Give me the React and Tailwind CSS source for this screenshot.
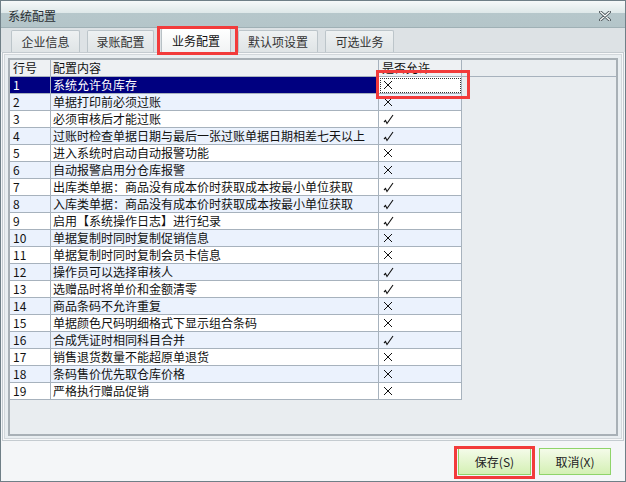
import React from "react";

const rows = [
  ["系统允许负库存", false],
  ["单据打印前必须过账", false],
  ["必须审核后才能过账", true],
  ["过账时检查单据日期与最后一张过账单据日期相差七天以上", true],
  ["进入系统时启动自动报警功能", false],
  ["自动报警启用分仓库报警", false],
  ["出库类单据：商品没有成本价时获取成本按最小单位获取", true],
  ["入库类单据：商品没有成本价时获取成本按最小单位获取", true],
  ["启用【系统操作日志】进行纪录", true],
  ["单据复制时同时复制促销信息", false],
  ["单据复制时同时复制会员卡信息", false],
  ["操作员可以选择审核人", true],
  ["选赠品时将单价和金额清零", true],
  ["商品条码不允许重复", false],
  ["单据颜色尺码明细格式下显示组合条码", false],
  ["合成凭证时相同科目合并", true],
  ["销售退货数量不能超原单退货", false],
  ["条码售价优先取仓库价格", false],
  ["严格执行赠品促销", false],
];

function Cross() {
  return (
    <svg width="10" height="10" viewBox="0 0 10 10" className="block">
      <path d="M1 1 L9 9 M9 1 L1 9" stroke="#111" strokeWidth="1" fill="none" />
    </svg>
  );
}

function Check() {
  return (
    <svg width="11" height="11" viewBox="0 0 11 11" className="block">
      <path d="M1 8 L2.5 6.5 L4 9.5 L10 1" stroke="#111" strokeWidth="1.1" fill="none" />
    </svg>
  );
}

const tabs = [
  ["企业信息", "w-[69px]"],
  ["录账配置", "w-[67px]"],
  ["业务配置", "w-[70px]"],
  ["默认项设置", "w-[80px]"],
  ["可选业务", "w-[69px]"],
];

export default function App() {
  return (
    <div className="relative w-[626px] h-[482px] border border-[#6f7f87] bg-[#f4f6f8] flex flex-col overflow-hidden font-['Noto_Sans_CJK_SC','Noto_Sans',sans-serif] text-[12px] text-[#111] leading-none whitespace-nowrap">
      {/* title bar */}
      <div className="h-[27px] shrink-0 flex items-end justify-between pl-[7px] pr-[14px] pb-[5px] bg-[linear-gradient(to_bottom,#f6f9f9_0%,#dde7e8_48%,#b6c7cb_48%,#b4c5c9_100%)] border-b border-[#9fb0b5]">
        <span className="text-[12px] text-[#2a2f33]">系统配置</span>
        <svg width="12" height="10" viewBox="0 0 12 10" className="mb-[1px]">
          <path d="M1.5 1 L10.5 9 M10.5 1 L1.5 9" stroke="#4a5358" strokeWidth="3" strokeLinecap="round" />
          <path d="M1.5 1 L10.5 9 M10.5 1 L1.5 9" stroke="#ffffff" strokeWidth="1.2" strokeLinecap="round" />
        </svg>
      </div>

      {/* tab strip */}
      <div className="h-[24px] shrink-0 bg-[#dde2e5] flex items-end pl-[10px] gap-[7px]">
        {tabs.map(([t, w], i) =>
          i === 2 ? (
            <div
              key={t}
              className={`${w} h-[24px] flex items-center justify-center bg-[linear-gradient(to_bottom,#ffffff,#f1f3f4)] border border-b-0 border-[#b7c0c5] text-[12px] text-[#111] rounded-t-[2px]`}
            >
              {t}
            </div>
          ) : (
            <div
              key={t}
              className={`${w} h-[22px] flex items-center justify-center bg-[linear-gradient(to_bottom,#eef1f2,#dfe4e6)] border border-b-0 border-[#bcc5ca] text-[12px] text-[#333] rounded-t-[2px]`}
            >
              {t}
            </div>
          )
        )}
      </div>

      {/* panel */}
      <div className="flex-1 mx-[1px] border border-[#c4cbd0] bg-[#f7f8f9] p-[1px] flex">
        <div className="flex-1 border border-[#d2d7db] bg-[#e9eef1] pt-[3px] pb-[2px] px-[3px] flex">
          <div className="flex-1 border-2 border-double border-[#a8b0b6] bg-[#e9edf0] relative">
            {/* header */}
            <div className="flex h-[17px] border-b border-[#a7b2bd]">
              <div className="w-[41px] border-r border-[#a7b2bd] flex items-center pl-[3px] bg-[#eef1f3] text-[12px]">行号</div>
              <div className="w-[328px] border-r border-[#a7b2bd] flex items-center pl-[2px] bg-[#eef1f3] text-[12px]">配置内容</div>
              <div className="w-[83px] border-r border-[#a7b2bd] flex items-center pl-[3px] bg-[#eef1f3] text-[12px]">是否允许</div>
            </div>
            {rows.map(([text, ok], i) => {
              const sel = i === 0;
              const bg = sel ? "" : i % 2 === 1 ? "bg-[#ebf2fd]" : "bg-white";
              return (
                <div key={i} className="flex h-[17px]">
                  <div
                    className={`w-[41px] border-r border-b border-[#a7b2bd] flex items-center pl-[3px] text-[12px] ${
                      sel ? "bg-[#000080] text-white" : bg
                    }`}
                  >
                    {i + 1}
                  </div>
                  <div
                    className={`w-[328px] border-r border-b border-[#a7b2bd] flex items-center pl-[2px] text-[12px] ${
                      sel ? "bg-[#000080] text-white" : bg
                    }`}
                  >
                    {text}
                  </div>
                  <div
                    className={`w-[83px] border-r border-b border-[#a7b2bd] flex items-center pl-[4px] ${
                      sel ? "bg-white outline-1 outline-dotted outline-[#333] -outline-offset-2" : bg
                    }`}
                  >
                    {ok ? <Check /> : <Cross />}
                  </div>
                </div>
              );
            })}
          </div>
        </div>
      </div>

      {/* footer */}
      <div className="h-[40px] shrink-0 bg-[#f4f6f8] flex items-center justify-end gap-[8px] pr-[14px] pt-[1px]">
        <button className="w-[73px] h-[27px] border border-[#8fd46a] bg-[linear-gradient(to_bottom,#f4fbe9,#d4f0b4)] text-[12px] text-[#222]">
          保存(S)
        </button>
        <button className="w-[72px] h-[27px] border border-[#8fd46a] bg-[linear-gradient(to_bottom,#f4fbe9,#d4f0b4)] text-[12px] text-[#222]">
          取消(X)
        </button>
      </div>

      {/* annotation boxes */}
      <div className="absolute left-[156px] top-[25px] w-[81px] h-[29px] border-[3px] border-[#f23b3b] pointer-events-none" />
      <div className="absolute left-[375px] top-[69px] w-[94px] h-[29px] border-[3px] border-[#f23b3b] pointer-events-none" />
      <div className="absolute left-[453px] top-[445px] w-[81px] h-[33px] border-[3px] border-[#f23b3b] pointer-events-none" />
    </div>
  );
}
